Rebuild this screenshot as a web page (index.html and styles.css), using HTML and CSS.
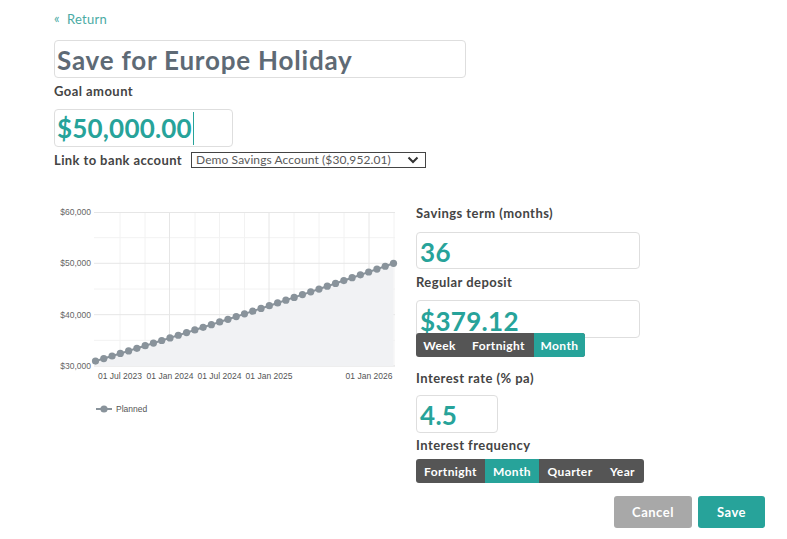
FILE: index.html
```html
<!DOCTYPE html>
<html>
<head>
<meta charset="utf-8">
<link rel="stylesheet" href="styles.css">
</head>
<body>
<div class="page">
  <a class="return"><span class="chev">«</span>Return</a>
  <div class="title-box">Save for Europe Holiday</div>
  <div class="label first">Goal amount</div>
  <div class="goal-box"><span class="goal-text">$50,000.00</span><span class="caret"></span></div>
  <div class="link-row">
    <span class="label-inline">Link to bank account</span>
    <div class="select">
      <span>Demo Savings Account ($30,952.01)</span>
      <svg class="sel-chev" width="12" height="8" viewBox="0 0 12 8"><path d="M1.5 1.5 L6 6 L10.5 1.5" fill="none" stroke="#333" stroke-width="2"/></svg>
    </div>
  </div>
  <div class="main">
    <div class="chart">
      <svg width="362" height="220" viewBox="54 200 362 220">
        <g class="grid-light">
          <line x1="94" y1="237.7" x2="395" y2="237.7"/>
          <line x1="94" y1="289" x2="395" y2="289"/>
          <line x1="94" y1="340.3" x2="395" y2="340.3"/>
          <line x1="120" y1="212" x2="120" y2="366"/>
          <line x1="145" y1="212" x2="145" y2="366"/>
          <line x1="195" y1="212" x2="195" y2="366"/>
          <line x1="219.5" y1="212" x2="219.5" y2="366"/>
          <line x1="244.5" y1="212" x2="244.5" y2="366"/>
          <line x1="294" y1="212" x2="294" y2="366"/>
          <line x1="319" y1="212" x2="319" y2="366"/>
          <line x1="344" y1="212" x2="344" y2="366"/>
          <line x1="394" y1="212" x2="394" y2="366"/>
        </g>
        <g class="grid">
          <line x1="94" y1="212.5" x2="395" y2="212.5"/>
          <line x1="94" y1="263.3" x2="395" y2="263.3"/>
          <line x1="94" y1="314.7" x2="395" y2="314.7"/>
          <line x1="169.5" y1="212" x2="169.5" y2="366"/>
          <line x1="269" y1="212" x2="269" y2="366"/>
          <line x1="369" y1="212" x2="369" y2="366"/>
        </g>
        <line class="axis" x1="94" y1="366" x2="395" y2="366"/>
        <polygon class="area" points="95.5,366 95.5,361.11 103.78,358.57 112.06,356.02 120.33,353.46 128.61,350.89 136.89,348.31 145.17,345.72 153.44,343.12 161.72,340.51 170,337.89 178.28,335.26 186.56,332.62 194.83,329.97 203.11,327.31 211.39,324.64 219.67,321.97 227.94,319.28 236.22,316.58 244.5,313.87 252.78,311.15 261.06,308.42 269.33,305.68 277.61,302.93 285.89,300.17 294.17,297.4 302.44,294.62 310.72,291.83 319,289.03 327.28,286.21 335.56,283.39 343.83,280.56 352.11,277.71 360.39,274.86 368.67,271.99 376.94,269.12 385.22,266.23 393.5,263.33 393.5,366"/>
        <polyline class="line" points="95.5,361.11 103.78,358.57 112.06,356.02 120.33,353.46 128.61,350.89 136.89,348.31 145.17,345.72 153.44,343.12 161.72,340.51 170,337.89 178.28,335.26 186.56,332.62 194.83,329.97 203.11,327.31 211.39,324.64 219.67,321.97 227.94,319.28 236.22,316.58 244.5,313.87 252.78,311.15 261.06,308.42 269.33,305.68 277.61,302.93 285.89,300.17 294.17,297.4 302.44,294.62 310.72,291.83 319,289.03 327.28,286.21 335.56,283.39 343.83,280.56 352.11,277.71 360.39,274.86 368.67,271.99 376.94,269.12 385.22,266.23 393.5,263.33"/>
        <g class="dots">
          <circle cx="95.5" cy="361.11" r="3.6"/><circle cx="103.78" cy="358.57" r="3.6"/><circle cx="112.06" cy="356.02" r="3.6"/><circle cx="120.33" cy="353.46" r="3.6"/><circle cx="128.61" cy="350.89" r="3.6"/><circle cx="136.89" cy="348.31" r="3.6"/><circle cx="145.17" cy="345.72" r="3.6"/><circle cx="153.44" cy="343.12" r="3.6"/><circle cx="161.72" cy="340.51" r="3.6"/><circle cx="170" cy="337.89" r="3.6"/><circle cx="178.28" cy="335.26" r="3.6"/><circle cx="186.56" cy="332.62" r="3.6"/><circle cx="194.83" cy="329.97" r="3.6"/><circle cx="203.11" cy="327.31" r="3.6"/><circle cx="211.39" cy="324.64" r="3.6"/><circle cx="219.67" cy="321.97" r="3.6"/><circle cx="227.94" cy="319.28" r="3.6"/><circle cx="236.22" cy="316.58" r="3.6"/><circle cx="244.5" cy="313.87" r="3.6"/><circle cx="252.78" cy="311.15" r="3.6"/><circle cx="261.06" cy="308.42" r="3.6"/><circle cx="269.33" cy="305.68" r="3.6"/><circle cx="277.61" cy="302.93" r="3.6"/><circle cx="285.89" cy="300.17" r="3.6"/><circle cx="294.17" cy="297.4" r="3.6"/><circle cx="302.44" cy="294.62" r="3.6"/><circle cx="310.72" cy="291.83" r="3.6"/><circle cx="319" cy="289.03" r="3.6"/><circle cx="327.28" cy="286.21" r="3.6"/><circle cx="335.56" cy="283.39" r="3.6"/><circle cx="343.83" cy="280.56" r="3.6"/><circle cx="352.11" cy="277.71" r="3.6"/><circle cx="360.39" cy="274.86" r="3.6"/><circle cx="368.67" cy="271.99" r="3.6"/><circle cx="376.94" cy="269.12" r="3.6"/><circle cx="385.22" cy="266.23" r="3.6"/><circle cx="393.5" cy="263.33" r="3.6"/>
        </g>
        <g class="ylab">
          <text x="91" y="215">$60,000</text>
          <text x="91" y="266">$50,000</text>
          <text x="91" y="318">$40,000</text>
          <text x="91" y="369">$30,000</text>
        </g>
        <g class="xlab">
          <text x="120" y="379">01 Jul 2023</text>
          <text x="170" y="379">01 Jan 2024</text>
          <text x="219.5" y="379">01 Jul 2024</text>
          <text x="269" y="379">01 Jan 2025</text>
          <text x="369" y="379">01 Jan 2026</text>
        </g>
        <line class="line" x1="96" y1="409" x2="112" y2="409"/>
        <circle class="dot" cx="104" cy="409" r="3.6"/>
        <text class="legend" x="116" y="412">Planned</text>
      </svg>
    </div>
    <div class="side">
      <div class="label s1">Savings term (months)</div>
      <div class="field wide f1">36</div>
      <div class="label s2">Regular deposit</div>
      <div class="field wide f2">$379.12</div>
      <div class="seg seg1">
        <span class="opt w47">Week</span><span class="opt w71">Fortnight</span><span class="opt w51 active">Month</span>
      </div>
      <div class="label s3">Interest rate (% pa)</div>
      <div class="field narrow f3">4.5</div>
      <div class="label s4">Interest frequency</div>
      <div class="seg seg2">
        <span class="opt w69">Fortnight</span><span class="opt w54 active">Month</span><span class="opt w62">Quarter</span><span class="opt w43">Year</span>
      </div>
      <div class="actions">
        <button class="btn cancel">Cancel</button>
        <button class="btn save">Save</button>
      </div>
    </div>
  </div>
</div>
</body>
</html>
```
FILE: styles.css
```css
* { box-sizing: border-box; }
body {
  margin: 0;
  background: #ffffff;
  font-family: Lato, "Open Sans", sans-serif;
  color: #444;
}
.page {
  padding: 10px 0 0 54px;
}
.return {
  display: flex;
  align-items: center;
  height: 17px;
  font-size: 13px;
  color: #4aaba4;
  letter-spacing: 0.3px;
}
.return .chev {
  font-size: 13px;
  margin-right: 7px;
  position: relative;
  top: -1px;
}
.title-box {
  margin-top: 13px;
  width: 412px;
  height: 38px;
  border: 1px solid #dedede;
  border-radius: 4px;
  padding: 0 2px;
  font-size: 26px;
  font-weight: 700;
  line-height: 38px;
  color: #5e6a75;
  letter-spacing: 0.8px;
}
.label {
  font-size: 13px;
  font-weight: 700;
  line-height: 14px;
  color: #444;
  letter-spacing: 0.45px;
}
.label.first { margin-top: 6px; }
.goal-box {
  margin-top: 11px;
  width: 179px;
  height: 38px;
  border: 1px solid #dedede;
  border-radius: 4px;
  padding: 0 2px;
  display: flex;
  align-items: center;
}
.goal-text {
  font-size: 26px;
  font-weight: 700;
  color: #27a39a;
  letter-spacing: 0.2px;
}
.caret {
  width: 1px;
  height: 33px;
  background: #27a39a;
  margin-left: 1px;
}
.link-row {
  margin-top: 4px;
  display: flex;
  align-items: center;
  height: 17px;
}
.label-inline {
  font-size: 13px;
  font-weight: 700;
  color: #444;
  width: 137px;
  letter-spacing: 0.4px;
}
.select {
  width: 235px;
  height: 16px;
  border: 1px solid #444;
  display: flex;
  align-items: center;
  justify-content: space-between;
  padding: 0 6px 0 4px;
  font-size: 12px;
  color: #5a5a5a;
  letter-spacing: 0.1px;
}
.sel-chev { display: block; }
.main {
  margin-top: 32px;
  display: flex;
}
.chart {
  width: 362px;
}
.chart svg { display: block; }
.grid-light line { stroke: #f2f2f2; stroke-width: 1; }
.grid line { stroke: #e6e6e6; stroke-width: 1; }
.axis { stroke: #dddddd; stroke-width: 1; }
.area { fill: #f1f2f4; }
.line { fill: none; stroke: #89939b; stroke-width: 2; }
.dots circle, .dot { fill: #89939b; }
.ylab text {
  font-family: "Liberation Sans", Arial, sans-serif;
  font-size: 8.5px;
  fill: #666;
  text-anchor: end;
}
.xlab text {
  font-family: "Liberation Sans", Arial, sans-serif;
  font-size: 8.5px;
  fill: #555;
  text-anchor: middle;
}
.legend {
  font-family: "Liberation Sans", Arial, sans-serif;
  font-size: 8.5px;
  fill: #555;
}
.side {
  width: 349px;
  display: flex;
  flex-direction: column;
  align-items: flex-start;
}
.s1 { margin-top: 6px; }
.s2 { margin-top: 6px; }
.s3 { margin-top: 14px; }
.s4 { margin-top: 5px; }
.field {
  height: 38px;
  border: 1px solid #dedede;
  border-radius: 4px;
  padding: 2px 3px 0;
  font-size: 26px;
  font-weight: 700;
  line-height: 34px;
  color: #27a39a;
  letter-spacing: 0.3px;
}
.wide { width: 224px; }
.narrow { width: 82px; }
.f1 { margin-top: 12px; height: 37px; }
.f2 { margin-top: 11px; line-height: 36px; }
.f3 { margin-top: 10px; }
.seg {
  display: flex;
  height: 24px;
  border-radius: 3px;
  overflow: hidden;
  background: #555555;
}
.seg1 { margin-top: -5px; position: relative; }
.seg2 { margin-top: 7px; }
.opt {
  display: flex;
  align-items: center;
  justify-content: center;
  font-size: 12px;
  font-weight: 700;
  color: #ffffff;
  letter-spacing: 0.4px;
}
.w43 { width: 43px; }
.w47 { width: 47px; }
.w51 { width: 51px; }
.w54 { width: 54px; }
.w62 { width: 62px; }
.w69 { width: 69px; }
.w71 { width: 71px; }
.opt.active { background: #27a39a; }
.actions {
  margin-top: 13px;
  align-self: stretch;
  display: flex;
  justify-content: flex-end;
  gap: 6px;
}
.btn {
  height: 32px;
  border: none;
  border-radius: 3px;
  font-family: Lato, "Open Sans", sans-serif;
  font-size: 13px;
  font-weight: 700;
  color: #fff;
  letter-spacing: 0.5px;
}
.cancel { width: 78px; background: #a8a8a8; }
.save { width: 67px; background: #27a39a; }
```
